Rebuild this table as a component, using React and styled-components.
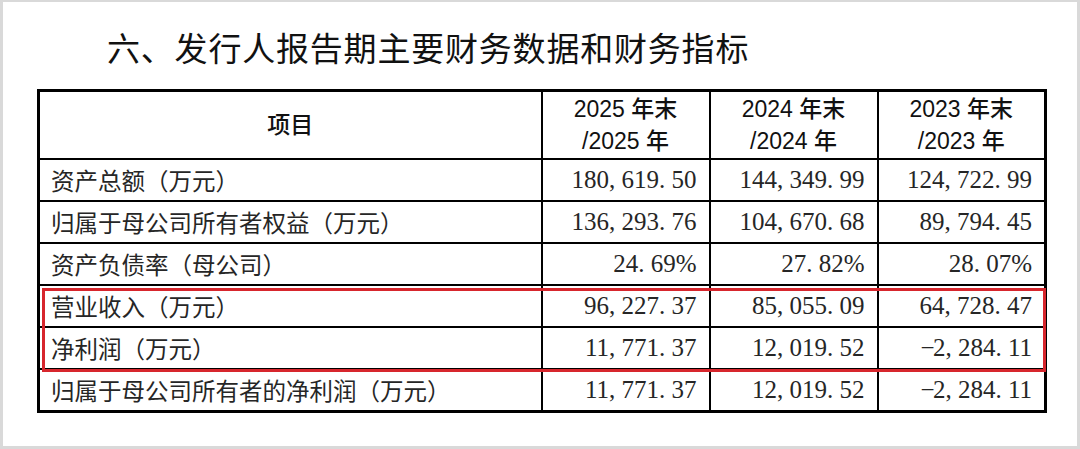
import React from 'react';
import styled, { createGlobalStyle } from 'styled-components';

const GlobalStyle = createGlobalStyle`
  html, body {
    margin: 0;
    padding: 0;
    background: #ffffff;
  }
`;

const Frame = styled.div`
  box-sizing: border-box;
  width: 1080px;
  height: 449px;
  border: 3px solid #d9d9d9;
  border-top-width: 2px;
  background: #fff;
  padding: 23px 0 0 34px;
  font-family: "Noto Sans CJK SC", "Liberation Sans", sans-serif;
  color: #1a1a1a;
  overflow: hidden;
`;

const Title = styled.h1`
  margin: 0 0 0 70px;
  font-size: 33px;
  line-height: 44px;
  font-weight: 400;
  letter-spacing: 0.8px;
  color: #111;
`;

const TableWrap = styled.div`
  position: relative;
  width: 1007px;
  margin-top: 20px;
`;

const Table = styled.table`
  width: 1007px;
  table-layout: fixed;
  border-collapse: collapse;
  border: 3px solid #000;
`;

const HeadCell = styled.th`
  height: 66px;
  padding: 0;
  border: 2px solid #000;
  font-family: "Liberation Sans", "Noto Sans CJK SC", sans-serif;
  font-size: 23px;
  font-weight: 500;
  line-height: 32px;
  text-align: center;
  color: #111;
`;

const Cell = styled.td`
  height: 40px;
  padding: 0 ${(p) => (p.$num ? '12px' : '0')} 0 ${(p) => (p.$num ? '0' : '11px')};
  border: 2px solid #000;
  text-align: ${(p) => (p.$num ? 'right' : 'left')};
  font-family: ${(p) =>
    p.$num
      ? '"Liberation Serif", "Noto Sans CJK SC", serif'
      : '"Noto Sans CJK SC", sans-serif'};
  font-size: ${(p) => (p.$num ? '25px' : '23.5px')};
  font-weight: 400;
  line-height: 38px;
  color: #262626;
  white-space: nowrap;
`;

const Punct = styled.span`
  display: inline-block;
  width: 0.5em;
  text-align: ${(p) => (p.$center ? 'center' : 'left')};
`;

const Highlight = styled.div`
  position: absolute;
  left: 5px;
  top: 199px;
  width: 1004px;
  height: 84px;
  box-sizing: border-box;
  border: 3px solid #d7262d;
  pointer-events: none;
`;

const years = ['2025', '2024', '2023'];

const rows = [
  ['资产总额（万元）', '180,619.50', '144,349.99', '124,722.99'],
  ['归属于母公司所有者权益（万元）', '136,293.76', '104,670.68', '89,794.45'],
  ['资产负债率（母公司）', '24.69%', '27.82%', '28.07%'],
  ['营业收入（万元）', '96,227.37', '85,055.09', '64,728.47'],
  ['净利润（万元）', '11,771.37', '12,019.52', '-2,284.11'],
  ['归属于母公司所有者的净利润（万元）', '11,771.37', '12,019.52', '-2,284.11'],
];

const Num = ({ value }) => (
  <>
    {value.split('').map((ch, i) =>
      ch === ',' || ch === '.' ? (
        <Punct key={i}>{ch}</Punct>
      ) : ch === '-' ? (
        <Punct key={i} $center>
          −
        </Punct>
      ) : (
        <React.Fragment key={i}>{ch}</React.Fragment>
      )
    )}
  </>
);

const App = () => {
  return (
    <>
      <GlobalStyle />
      <Frame>
        <Title>六、发行人报告期主要财务数据和财务指标</Title>
        <TableWrap>
          <Table>
            <colgroup>
              <col style={{ width: '503px' }} />
              <col style={{ width: '168px' }} />
              <col style={{ width: '168px' }} />
              <col style={{ width: '168px' }} />
            </colgroup>
            <thead>
              <tr>
                <HeadCell>项目</HeadCell>
                {years.map((y) => (
                  <HeadCell key={y}>
                    {y} 年末
                    <br />/{y} 年
                  </HeadCell>
                ))}
              </tr>
            </thead>
            <tbody>
              {rows.map(([label, ...vals]) => (
                <tr key={label}>
                  <Cell>{label}</Cell>
                  {vals.map((v, i) => (
                    <Cell key={i} $num>
                      <Num value={v} />
                    </Cell>
                  ))}
                </tr>
              ))}
            </tbody>
          </Table>
          <Highlight />
        </TableWrap>
      </Frame>
    </>
  );
};

export default App;
